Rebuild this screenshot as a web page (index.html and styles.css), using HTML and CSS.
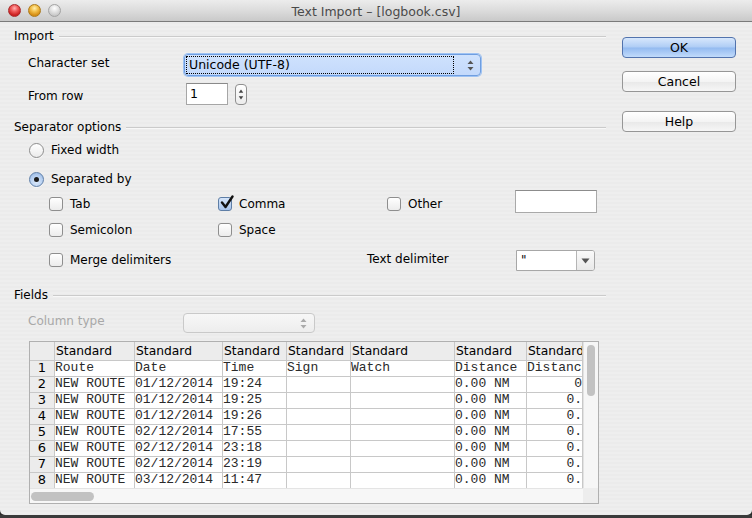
FILE: index.html
```html
<!DOCTYPE html>
<html>
<head>
<meta charset="utf-8">
<title>Text Import</title>
<link rel="stylesheet" href="styles.css">
</head>
<body>
<div class="window">
  <div class="titlebar">
    <div class="lights">
      <span class="light red"></span>
      <span class="light yellow"></span>
      <span class="light grey"></span>
    </div>
    <div class="title">Text Import – [logbook.csv]</div>
    <div></div>
  </div>
  <div class="content">
    <div class="main">
      <div class="heading h-import"><span>Import</span><i class="rule"></i></div>

      <div class="row row-charset">
        <span class="lbl">Character set</span>
        <div class="select focused">
          <span class="select-text">Unicode (UTF-8)</span>
          <svg class="updown" width="7" height="11" viewBox="0 0 7 11"><path d="M3.5 0.5 L6.5 4 H0.5 Z M3.5 10.5 L6.5 7 H0.5 Z" fill="#333"/></svg>
        </div>
      </div>

      <div class="row row-from">
        <span class="lbl">From row</span>
        <div class="numfield">1</div>
        <div class="spinner">
          <svg width="11" height="21" viewBox="0 0 11 21"><path d="M5.5 5 L8 8.5 H3 Z M5.5 16 L8 12.5 H3 Z" fill="#444"/></svg>
        </div>
      </div>

      <div class="heading h-sep"><span>Separator options</span><i class="rule"></i></div>

      <div class="radio-row r-fixed"><span class="radio"></span><span>Fixed width</span></div>
      <div class="radio-row r-sep"><span class="radio on"></span><span>Separated by</span></div>

      <div class="checks">
        <div class="check-row c-row1">
          <label class="check"><span class="box"></span><span>Tab</span></label>
          <label class="check"><span class="box on"><svg width="16" height="16" viewBox="0 0 16 16"><path d="M3 7.5 L6.5 12 L13.5 1.5" stroke="#111" stroke-width="2.4" fill="none" stroke-linecap="round" stroke-linejoin="round"/></svg></span><span>Comma</span></label>
          <label class="check"><span class="box"></span><span>Other</span></label>
          <div class="textfield other"></div>
        </div>
        <div class="check-row c-row2">
          <label class="check"><span class="box"></span><span>Semicolon</span></label>
          <label class="check"><span class="box"></span><span>Space</span></label>
        </div>
        <div class="merge-row">
          <label class="check"><span class="box"></span><span>Merge delimiters</span></label>
          <span class="delim-lbl">Text delimiter</span>
          <div class="combo"><span class="combo-text">"</span><span class="combo-btn"><svg width="9" height="6" viewBox="0 0 9 6"><path d="M0.5 0.5 H8.5 L4.5 5.5 Z" fill="#555"/></svg></span></div>
        </div>
      </div>

      <div class="heading h-fields"><span>Fields</span><i class="rule"></i></div>

      <div class="row row-coltype">
        <span class="lbl disabled">Column type</span>
        <div class="select disabled-select">
          <svg class="updown" width="7" height="11" viewBox="0 0 7 11"><path d="M3.5 0.5 L6.5 4 H0.5 Z M3.5 10.5 L6.5 7 H0.5 Z" fill="#aaa"/></svg>
        </div>
      </div>

      <div class="preview">
        <div class="grid-clip">
          <table class="grid">
            <colgroup>
              <col class="w-num"><col class="w1"><col class="w2"><col class="w3"><col class="w4"><col class="w5"><col class="w6"><col class="w7">
            </colgroup>
            <thead>
              <tr><th class="corner"></th><th>Standard</th><th>Standard</th><th>Standard</th><th>Standard</th><th>Standard</th><th>Standard</th><th>Standard</th></tr>
            </thead>
            <tbody>
              <tr><td class="num">1</td><td>Route</td><td>Date</td><td>Time</td><td>Sign</td><td>Watch</td><td>Distance</td><td>Distance</td></tr>
              <tr><td class="num">2</td><td>NEW ROUTE</td><td>01/12/2014</td><td>19:24</td><td></td><td></td><td>0.00 NM</td><td class="r">0</td></tr>
              <tr><td class="num">3</td><td>NEW ROUTE</td><td>01/12/2014</td><td>19:25</td><td></td><td></td><td>0.00 NM</td><td class="r">0.</td></tr>
              <tr><td class="num">4</td><td>NEW ROUTE</td><td>01/12/2014</td><td>19:26</td><td></td><td></td><td>0.00 NM</td><td class="r">0.</td></tr>
              <tr><td class="num">5</td><td>NEW ROUTE</td><td>02/12/2014</td><td>17:55</td><td></td><td></td><td>0.00 NM</td><td class="r">0.</td></tr>
              <tr><td class="num">6</td><td>NEW ROUTE</td><td>02/12/2014</td><td>23:18</td><td></td><td></td><td>0.00 NM</td><td class="r">0.</td></tr>
              <tr><td class="num">7</td><td>NEW ROUTE</td><td>02/12/2014</td><td>23:19</td><td></td><td></td><td>0.00 NM</td><td class="r">0.</td></tr>
              <tr><td class="num">8</td><td>NEW ROUTE</td><td>03/12/2014</td><td>11:47</td><td></td><td></td><td>0.00 NM</td><td class="r">0.</td></tr>
            </tbody>
          </table>
        </div>
        <div class="vscroll"><span class="vthumb"></span></div>
        <div class="hscroll"><span class="hthumb"></span></div>
        <div class="scroll-corner"></div>
      </div>
    </div>

    <div class="buttons">
      <div class="btn default">OK</div>
      <div class="btn b-cancel">Cancel</div>
      <div class="btn b-help">Help</div>
    </div>
  </div>
</div>
<div class="below"></div>
</body>
</html>
```

FILE: styles.css
```css
html, body {
  margin: 0;
  padding: 0;
  width: 752px;
  height: 518px;
  overflow: hidden;
  background: #2b2b2b;
}

body {
  font-family: "DejaVu Sans", "Noto Sans", sans-serif;
  font-size: 12px;
  color: #000;
}

.window {
  width: 752px;
  height: 515px;
  background: repeating-linear-gradient(to bottom, #eeeeee 0, #eeeeee 2px, #ebebeb 2px, #ebebeb 4px);
  border-radius: 0 0 5px 5px;
  overflow: hidden;
}

.below {
  height: 3px;
  background: #3a3a3a;
}

/* title bar */
.titlebar {
  height: 21px;
  border-bottom: 1px solid #7a7a7a;
  background: linear-gradient(to bottom, #ececec 0%, #dcdcdc 50%, #c9c9c9 100%);
  display: grid;
  grid-template-columns: 1fr auto 1fr;
  align-items: center;
}

.lights {
  display: flex;
  gap: 7px;
  padding-left: 8px;
}

.light {
  width: 13px;
  height: 13px;
  border-radius: 50%;
  box-sizing: border-box;
}

.light.red {
  background: radial-gradient(circle at 50% 30%, #ffb3b3 0, #f05b5b 35%, #c81c1c 75%, #e86060 100%);
  border: 1px solid #a8292b;
}

.light.yellow {
  background: radial-gradient(circle at 50% 30%, #fff0b0 0, #f3c14c 35%, #d38a10 75%, #f2b84a 100%);
  border: 1px solid #ac7a1a;
}

.light.grey {
  background: radial-gradient(circle at 50% 30%, #ffffff 0, #e2e2e2 40%, #c4c4c4 80%, #dddddd 100%);
  border: 1px solid #a3a3a3;
}

.title {
  font-size: 12.5px;
  color: #4a4a4a;
  white-space: nowrap;
  padding-top: 1px;
}

/* content */
.content {
  display: flex;
  padding-left: 14px;
}

.main {
  width: 592px;
  display: flex;
  flex-direction: column;
}

.heading {
  display: flex;
  align-items: center;
  height: 16px;
  gap: 5px;
}

.heading .rule {
  flex: 1;
  height: 0;
  border-top: 1px solid #cbcbcb;
  border-bottom: 1px solid #f8f8f8;
  margin-top: 1px;
}

.h-import { margin-top: 6px; }
.h-sep { margin-top: 14px; }
.h-fields { margin-top: 19px; }

.row {
  display: flex;
  align-items: center;
  padding-left: 14px;
}

.lbl {
  width: 156px;
  flex: none;
}

.row-charset {
  height: 22px;
  margin-top: 10px;
}

.row-charset .lbl { padding-bottom: 4px; }

.select {
  box-sizing: border-box;
  height: 22px;
  display: flex;
  align-items: center;
  position: relative;
}

.select.focused {
  width: 297px;
  border: 1px solid #6f9ee0;
  box-shadow: 0 0 0 1px #9fc3f3;
  border-radius: 4px;
  background: linear-gradient(to bottom, #cfe2fd, #c3d9fb);
  padding-left: 1px;
}

.select-text {
  box-sizing: border-box;
  width: 268px;
  height: 18px;
  border: 1px dotted #000;
  padding-left: 2px;
  line-height: 16px;
  font-size: 12.5px;
}

.updown {
  margin-left: auto;
  margin-right: 6px;
}

.select.focused .updown path { fill: #555; }

.row-from {
  height: 22px;
  margin-top: 7px;
}

.row-from .lbl { padding-top: 3px; }

.numfield {
  box-sizing: border-box;
  width: 42px;
  height: 22px;
  margin-left: 2px;
  background: #fff;
  border: 1px solid #a6a6a6;
  border-top-color: #8a8a8a;
  padding-left: 3px;
  line-height: 20px;
  font-size: 12.5px;
}

.spinner {
  box-sizing: border-box;
  width: 12px;
  height: 21px;
  margin-left: 7px;
  border: 1px solid #8f8f8f;
  border-radius: 4px;
  background: linear-gradient(to bottom, #ffffff, #ececec);
  display: flex;
  align-items: center;
  justify-content: center;
}

.spinner svg { display: block; }

/* radios */
.radio-row {
  display: flex;
  align-items: center;
  height: 16px;
  padding-left: 15px;
  gap: 7px;
}

.r-fixed { margin-top: 7px; }
.r-sep { margin-top: 13px; }

.radio {
  box-sizing: border-box;
  width: 15px;
  height: 15px;
  border-radius: 50%;
  border: 1px solid #8d8d8d;
  background: linear-gradient(to bottom, #ffffff, #ebebeb);
  display: flex;
  align-items: center;
  justify-content: center;
  box-shadow: 0 1px 0 rgba(255,255,255,0.6);
}

.radio.on {
  border-color: #5f7fa8;
  background: radial-gradient(circle at 50% 70%, #dbe9fb 0, #b6cff0 55%, #8fb0de 100%);
}

.radio.on::after {
  content: "";
  width: 5px;
  height: 5px;
  border-radius: 50%;
  background: #1b1b1b;
}

/* checkboxes */
.checks {
  padding-left: 35px;
  display: flex;
  flex-direction: column;
}

.check-row {
  display: grid;
  grid-template-columns: 169px 169px 128px auto;
  grid-template-rows: 16px;
  align-items: center;
  height: 16px;
}

.c-row1 { margin-top: 9px; }
.c-row2 { margin-top: 10px; }

.check {
  display: flex;
  align-items: center;
  gap: 7px;
}

.box {
  box-sizing: border-box;
  width: 14px;
  height: 14px;
  border: 1px solid #8e8e8e;
  border-radius: 3px;
  background: linear-gradient(to bottom, #ffffff, #ececec);
  position: relative;
  flex: none;
}

.box.on {
  border-color: #5e7ea6;
  background: linear-gradient(to bottom, #d5e5fa, #a8c4ec);
}

.box.on svg {
  position: absolute;
  left: 0;
  top: -3px;
}

.textfield {
  box-sizing: border-box;
  background: #fff;
  border: 1px solid #a9a9a9;
  border-top-color: #8c8c8c;
}

.textfield.other {
  width: 82px;
  height: 23px;
  align-self: start;
  margin-top: -6px;
  margin-bottom: -1px;
}

.merge-row {
  display: grid;
  grid-template-columns: 318px 149px auto;
  grid-template-rows: 16px;
  align-items: center;
  height: 16px;
  margin-top: 14px;
}

.delim-lbl { margin-top: -3px; }

.combo {
  box-sizing: border-box;
  width: 79px;
  height: 21px;
  align-self: start;
  margin-top: -2px;
  margin-bottom: -3px;
  display: flex;
  border: 1px solid #a7a7a7;
  border-radius: 0 3px 3px 0;
  background: #fff;
}

.combo-text {
  flex: 1;
  padding-left: 4px;
  line-height: 18px;
  font-size: 12px;
}

.combo-btn {
  width: 17px;
  border-left: 1px solid #b5b5b5;
  background: linear-gradient(to bottom, #fafafa, #e9e9e9);
  border-radius: 0 2px 2px 0;
  display: flex;
  align-items: center;
  justify-content: center;
}

.row-coltype {
  height: 20px;
  margin-top: 10px;
}

.lbl.disabled {
  color: #a8a8a8;
  width: 155px;
  padding-bottom: 4px;
}

.disabled-select {
  width: 132px;
  height: 20px;
  border: 1px solid #c9c9c9;
  border-radius: 4px;
  background: linear-gradient(to bottom, #f7f7f7, #ededed);
}

.disabled-select .updown { margin-right: 7px; }

/* preview grid */
.preview {
  margin-top: 8px;
  margin-left: 15px;
  width: 570px;
  box-sizing: border-box;
  border: 1px solid #b0b0b0;
  display: grid;
  grid-template-columns: 553px 15px;
  grid-template-rows: 146px 15px;
  background: #fff;
}

.grid-clip {
  overflow: hidden;
}

.grid {
  border-collapse: separate;
  border-spacing: 0;
  table-layout: fixed;
  width: 553px;
}

.w-num { width: 25px; }
.w1 { width: 80px; }
.w2 { width: 88px; }
.w3 { width: 64px; }
.w4 { width: 64px; }
.w5 { width: 104px; }
.w6 { width: 72px; }
.w7 { width: 56px; }

.grid th, .grid td {
  box-sizing: border-box;
  border-right: 1px solid #c8c8c8;
  border-bottom: 1px solid #c8c8c8;
  padding: 0;
  white-space: nowrap;
  overflow: hidden;
  text-overflow: clip;
}

.grid th {
  height: 18px;
  background: #ececec;
  font-weight: normal;
  text-align: left;
  padding-left: 1px;
  font-size: 12.3px;
  line-height: 18px;
}

.grid td {
  height: 16px;
  font-family: "Liberation Mono", "DejaVu Sans Mono", monospace;
  font-size: 13px;
  line-height: 14px;
  padding-bottom: 1px;
  color: #2a2a2a;
}

.grid td.num {
  background: #ececec;
  font-family: "DejaVu Sans", sans-serif;
  font-size: 13px;
  text-align: center;
  color: #000;
}

.grid td.r {
  text-align: right;
}

.vscroll {
  background: #f6f6f6;
  border-left: 1px solid #e2e2e2;
  display: flex;
  justify-content: center;
  padding-top: 3px;
}

.vthumb {
  width: 8px;
  height: 51px;
  border-radius: 4px;
  background: #c2c2c2;
}

.hscroll {
  background: #f7f7f7;
  border-top: 1px solid #e4e4e4;
  padding-left: 1px;
  display: flex;
  align-items: center;
}

.hthumb {
  width: 63px;
  height: 9px;
  border-radius: 5px;
  background: #c2c2c2;
}

.scroll-corner {
  background: #ededed;
}

/* buttons */
.buttons {
  margin-left: 16px;
  width: 114px;
  display: flex;
  flex-direction: column;
}

.btn {
  box-sizing: border-box;
  height: 21px;
  border: 1px solid #969696;
  border-radius: 4px;
  background: linear-gradient(to bottom, #ffffff 0%, #f4f4f4 50%, #e8e8e8 51%, #f6f6f6 100%);
  text-align: center;
  line-height: 19px;
  font-size: 12.5px;
}

.btn.default {
  margin-top: 15px;
  border-color: #5273ad;
  background: linear-gradient(to bottom, #d7e7fc 0%, #afcdf5 48%, #93baf0 52%, #c1dbfb 100%);
}

.b-cancel { margin-top: 13px; }
.b-help { margin-top: 19px; }
```
